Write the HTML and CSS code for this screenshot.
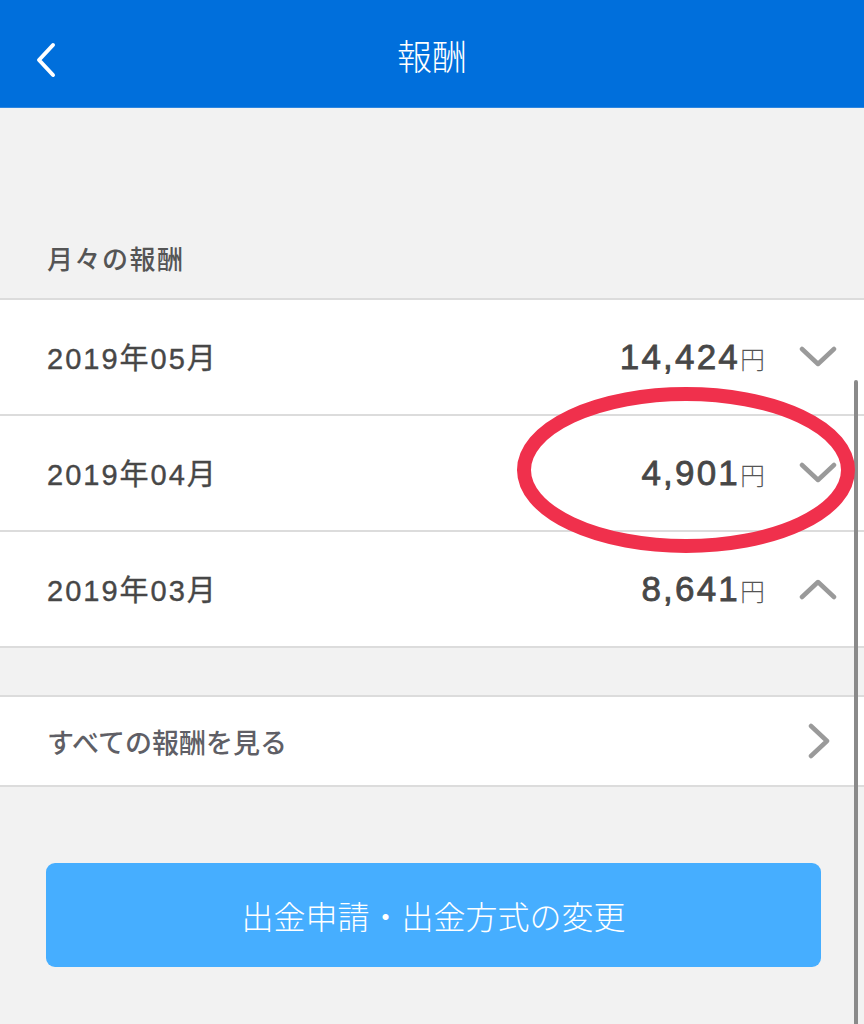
FILE: index.html
```html
<!DOCTYPE html>
<html lang="ja">
<head>
<meta charset="utf-8">
<link rel="stylesheet" href="styles.css">
</head>
<body>
<div class="page">
  <header class="topbar">
    <svg class="back" width="24" height="36" viewBox="0 0 24 36"><path d="M19 3 L5 18 L19 33" fill="none" stroke="#fff" stroke-width="4" stroke-linecap="round" stroke-linejoin="round"/></svg>
    <h1 class="title">報酬</h1>
  </header>
  <div class="section-label">月々の報酬</div>
  <div class="list">
    <div class="row">
      <span class="month">2019年05月</span>
      <span class="amount">14,424<span class="yen">円</span></span>
      <svg class="chev" width="38" height="24" viewBox="0 0 38 24"><path d="M3 4 L19 19 L35 4" fill="none" stroke="#9a9a9a" stroke-width="4.5" stroke-linecap="round" stroke-linejoin="round"/></svg>
    </div>
    <div class="row">
      <span class="month">2019年04月</span>
      <span class="amount">4,901<span class="yen">円</span></span>
      <svg class="chev" width="38" height="24" viewBox="0 0 38 24"><path d="M3 4 L19 19 L35 4" fill="none" stroke="#9a9a9a" stroke-width="4.5" stroke-linecap="round" stroke-linejoin="round"/></svg>
    </div>
    <div class="row">
      <span class="month">2019年03月</span>
      <span class="amount">8,641<span class="yen">円</span></span>
      <svg class="chev" width="38" height="24" viewBox="0 0 38 24"><path d="M3 20 L19 5 L35 20" fill="none" stroke="#9a9a9a" stroke-width="4.5" stroke-linecap="round" stroke-linejoin="round"/></svg>
    </div>
  </div>
  <div class="list list-all">
    <div class="row row-all">
      <span class="all-label">すべての報酬を見る</span>
      <svg class="chev-r" width="26" height="36" viewBox="0 0 26 36"><path d="M5 3 L21 18 L5 33" fill="none" stroke="#9a9a9a" stroke-width="4.5" stroke-linecap="round" stroke-linejoin="round"/></svg>
    </div>
  </div>
  <div class="btn-wrap">
    <button class="btn">出金申請・出金方式の変更</button>
  </div>
  <div class="scrollbar"></div>
  <svg class="circle" width="360" height="184" viewBox="0 0 360 184"><ellipse cx="176" cy="91" rx="162" ry="76" fill="none" stroke="#f0304c" stroke-width="14"/></svg>
</div>
</body>
</html>
```
FILE: styles.css
```css
* { box-sizing: border-box; }
html, body { margin: 0; padding: 0; }
body {
  width: 864px;
  height: 1024px;
  overflow: hidden;
  background: #f2f2f2;
  font-family: "Liberation Sans", "Noto Sans CJK JP", sans-serif;
}
.page { position: relative; width: 864px; height: 1024px; }
.topbar {
  height: 108px;
  background: #006fdc;
  border-bottom: 1px solid #2d86e0;
  display: flex;
  align-items: center;
  justify-content: center;
  position: relative;
}
.back { position: absolute; left: 34px; top: 42px; }
.title {
  margin: 0;
  color: #fff;
  font-family: "Noto Sans CJK JP", sans-serif;
  font-weight: 300;
  font-size: 35px;
  line-height: 40px;
  padding-top: 2px;
}
.section-label {
  padding: 134px 0 0 47px;
  height: 190px;
  font-family: "Noto Sans CJK JP", sans-serif;
  font-size: 26px;
  letter-spacing: 1.5px;
  font-weight: 500;
  color: #555;
  line-height: 32px;
}
.list {
  background: #fff;
  border-top: 2px solid #dcdcdc;
}
.row {
  height: 116px;
  display: flex;
  align-items: center;
  padding: 0 27px 0 47px;
  border-bottom: 2px solid #dcdcdc;
}
.month {
  flex: 1;
  font-size: 29px;
  letter-spacing: 2px;
  color: #474747;
  -webkit-text-stroke: 0.4px #474747;
  padding-bottom: 2px;
}
.amount {
  font-size: 35px;
  color: #474747;
  letter-spacing: 2.2px;
  -webkit-text-stroke: 0.8px #474747;
}
.yen {
  font-family: "Noto Sans CJK JP", sans-serif;
  font-weight: 300;
  font-size: 25px;
  letter-spacing: 0;
  color: #555;
  -webkit-text-stroke: 0;
}
.chev { margin-left: 34px; }
.list-all { margin-top: 47px; }
.row-all { height: 90px; padding-right: 32px; }
.all-label {
  flex: 1;
  font-family: "Noto Sans CJK JP", sans-serif;
  font-size: 27px;
  font-weight: 500;
  color: #5f5f66;
}
.btn-wrap { padding: 76px 43px 0 46px; }
.btn {
  width: 100%;
  height: 104px;
  border: none;
  border-radius: 9px;
  background: #46aeff;
  color: #fff;
  font-family: "Noto Sans CJK JP", sans-serif;
  font-weight: 300;
  font-size: 32px;
  padding: 0;
}
.scrollbar {
  position: absolute;
  left: 854px;
  top: 380px;
  width: 4px;
  height: 660px;
  border-radius: 2px;
  background: #8a8a8a;
}
.circle { position: absolute; left: 510px; top: 379px; }
```
